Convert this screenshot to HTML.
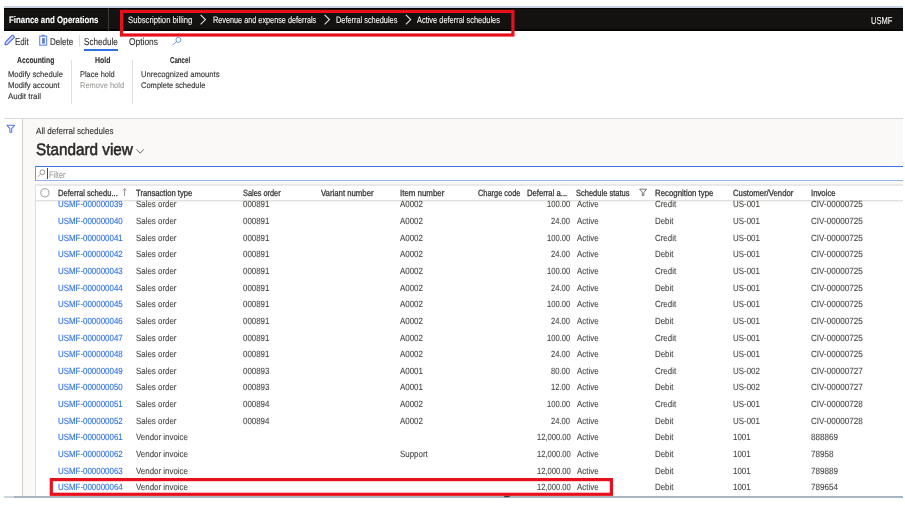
<!DOCTYPE html>
<html><head><meta charset="utf-8"><title>Active deferral schedules</title>
<style>
html,body{margin:0;padding:0;width:905px;height:505px;overflow:hidden;background:#fff;font-family:"Liberation Sans",sans-serif;position:relative}
.a{position:absolute;box-sizing:border-box}
.t{position:absolute;white-space:nowrap;line-height:1;transform-origin:0 0;text-rendering:geometricPrecision;-webkit-text-stroke:0.12px currentColor}
svg.ov{position:absolute;left:0;top:0}
.txt{position:absolute;left:0;top:0;width:905px;height:505px;filter:blur(0.3px)}
</style></head><body>
<!-- top light line -->
<div class=a style="left:4px;top:6px;width:899px;height:2px;background:#c7d1e2"></div>
<!-- nav bar -->
<div class=a style="left:4px;top:8px;width:899px;height:22.6px;background:#131211"></div>
<div class=a style="left:4px;top:8px;width:899px;height:1.2px;background:#000"></div>
<div class=a style="left:4px;top:28.8px;width:899px;height:2px;background:linear-gradient(#050505,#000 60%,rgba(0,0,0,0.25))"></div>
<div class=a style="left:108px;top:8px;width:1px;height:22.6px;background:#3b3a39"></div>
<!-- action pane separators / underline -->
<div class=a style="left:78.6px;top:34.6px;width:1px;height:12px;background:#e1dfdd"></div>
<div class=a style="left:84.2px;top:48.5px;width:33.9px;height:2px;background:#2f6fe0"></div>
<div class=a style="left:70.6px;top:60px;width:1px;height:43.5px;background:#e1dfdd"></div>
<div class=a style="left:131.6px;top:60px;width:1px;height:43.5px;background:#e1dfdd"></div>
<!-- body area -->
<div class=a style="left:4px;top:117.6px;width:899px;height:1.4px;background:#dcdad8"></div>
<div class=a style="left:23px;top:119px;width:880px;height:377px;background:#faf9f8"></div>
<div class=a style="left:22px;top:119px;width:1px;height:377px;background:#d2d0ce"></div>
<!-- filter box -->
<div class=a style="left:35px;top:166px;width:868px;height:15.3px;background:#fff;border-top:1px solid #3a74e2;border-left:1px solid #6d96e8;border-bottom:1.5px solid #95b3ee"></div>
<div class=a style="left:47.4px;top:168.2px;width:1px;height:10.6px;background:#4a4a4a"></div>
<!-- grid -->
<div class=a style="left:35px;top:184.2px;width:868px;height:312px;background:#fff;border-left:1px solid #e1dfdd"></div>
<div class=a style="left:35px;top:184.2px;width:868px;height:1.8px;background:#ebe9e7"></div>
<div class=a style="left:36px;top:200px;width:867px;height:2.8px;background:linear-gradient(#dad8d6,rgba(237,235,233,0.6) 50%,rgba(255,255,255,0))"></div>
<!-- bottom line -->
<div class=a style="left:4px;top:496px;width:899px;height:2px;background:#a9b4c2"></div>
<div class=a style="left:4px;top:496px;width:10px;height:2px;background:#ccd4de"></div>
<svg class=ov width="905" height="505" viewBox="0 0 905 505">
 <!-- breadcrumb chevrons -->
 <g fill="none" stroke="#e1dfdd" stroke-width="1.15">
  <path d="M200.6 14.9 L205.4 19.6 L200.6 24.3"/>
  <path d="M324.6 14.9 L329.4 19.6 L324.6 24.3"/>
  <path d="M405.9 14.9 L410.7 19.6 L405.9 24.3"/>
 </g>
 <!-- pencil -->
 <g transform="translate(9.3 40.3) rotate(-45)">
  <path d="M-6.2 0 L-4 -1.5 H5.3 Q6 -1.5 6 -0.8 V0.8 Q6 1.5 5.3 1.5 H-4 Z" fill="#d5ddf7" stroke="#4169e1" stroke-width="1.05" stroke-linejoin="round"/>
 </g>
 <!-- trash -->
 <rect x="39.7" y="36.2" width="6.9" height="9" fill="none" stroke="#7596ea" stroke-width="1.25"/>
 <path d="M41.9 36 V35.2 H44.6 V36" fill="none" stroke="#4f73e3" stroke-width="0.9"/>
 <rect x="42.1" y="37.9" width="2.8" height="5.8" fill="#5c7fe6"/>
 <!-- search -->
 <circle cx="178.4" cy="39.9" r="2.55" fill="none" stroke="#5b86e8" stroke-width="0.85"/>
 <path d="M176.6 41.8 L172.6 44.8" stroke="#6a8ee8" stroke-width="0.9"/>
 <!-- left filter -->
 <path d="M7 125.3 H14.6 L11.7 128.7 V132.2 H9.9 V128.7 Z" fill="none" stroke="#5677e6" stroke-width="1.05" stroke-linejoin="round"/>
 <!-- view chevron -->
 <path d="M136.6 149.3 L140.2 153.2 L143.8 149.3" fill="none" stroke="#605e5c" stroke-width="0.9"/>
 <!-- filter search -->
 <circle cx="42.4" cy="172.3" r="2.4" fill="none" stroke="#8a8886" stroke-width="0.85"/>
 <path d="M40.7 174.1 L37.6 177" stroke="#b39a88" stroke-width="0.95"/>
 <!-- grid circle -->
 <circle cx="44.9" cy="192.8" r="4.1" fill="none" stroke="#9c9a98" stroke-width="0.95"/>
 <!-- sort arrow -->
 <path d="M124.6 196 V188.8 M122.9 190.6 L124.6 188.6 L126.3 190.6" fill="none" stroke="#8a7f7c" stroke-width="0.85"/>
 <!-- header filter -->
 <path d="M639.6 189.2 H646.6 L643.9 192.2 V195.6 H642.3 V192.2 Z" fill="none" stroke="#6f6d6b" stroke-width="0.95" stroke-linejoin="round"/>
 <!-- cursor -->
 <path d="M504.2 496.6 Q504.8 496.3 506.9 496.5 Q508.8 496.3 509.6 496.6" fill="none" stroke="#3a3a3a" stroke-width="1.3"/>
</svg>
<div class=txt><span class=t style='left:9.30px;top:16px;font-size:9.57px;font-weight:700;color:#ffffff;transform:scaleX(0.821);'>Finance and Operations</span>
<span class=t style='left:128.20px;top:16px;font-size:9.28px;font-weight:400;color:#f3f2f1;transform:scaleX(0.832);'>Subscription billing</span>
<span class=t style='left:212.60px;top:16px;font-size:9.28px;font-weight:400;color:#f3f2f1;transform:scaleX(0.786);'>Revenue and expense deferrals</span>
<span class=t style='left:336.20px;top:16px;font-size:9.28px;font-weight:400;color:#f3f2f1;transform:scaleX(0.794);'>Deferral schedules</span>
<span class=t style='left:417.20px;top:16px;font-size:9.28px;font-weight:400;color:#f3f2f1;transform:scaleX(0.801);'>Active deferral schedules</span>
<span class=t style='left:871.00px;top:17px;font-size:10.14px;font-weight:400;color:#f3f2f1;transform:scaleX(0.745);'>USMF</span>
<span class=t style='left:15.20px;top:38px;font-size:9.86px;font-weight:400;color:#323130;transform:scaleX(0.806);'>Edit</span>
<span class=t style='left:49.80px;top:38px;font-size:9.86px;font-weight:400;color:#323130;transform:scaleX(0.814);'>Delete</span>
<span class=t style='left:84.30px;top:38px;font-size:9.86px;font-weight:400;color:#323130;transform:scaleX(0.820);'>Schedule</span>
<span class=t style='left:129.30px;top:38px;font-size:9.86px;font-weight:400;color:#323130;transform:scaleX(0.853);'>Options</span>
<span class=t style='left:16.70px;top:56px;font-size:8.7px;font-weight:700;color:#323130;transform:scaleX(0.780);'>Accounting</span>
<span class=t style='left:94.50px;top:56px;font-size:8.7px;font-weight:700;color:#323130;transform:scaleX(0.797);'>Hold</span>
<span class=t style='left:170.00px;top:56px;font-size:8.7px;font-weight:700;color:#323130;transform:scaleX(0.705);'>Cancel</span>
<span class=t style='left:8.00px;top:71px;font-size:8.26px;font-weight:400;color:#323130;transform:scaleX(0.921);'>Modify schedule</span>
<span class=t style='left:8.00px;top:82px;font-size:8.26px;font-weight:400;color:#323130;transform:scaleX(0.931);'>Modify account</span>
<span class=t style='left:7.70px;top:93px;font-size:8.26px;font-weight:400;color:#323130;transform:scaleX(0.961);'>Audit trail</span>
<span class=t style='left:80.00px;top:71px;font-size:8.26px;font-weight:400;color:#323130;transform:scaleX(0.900);'>Place hold</span>
<span class=t style='left:79.80px;top:82px;font-size:8.26px;font-weight:400;color:#a19f9d;transform:scaleX(0.906);'>Remove hold</span>
<span class=t style='left:140.80px;top:71px;font-size:8.26px;font-weight:400;color:#323130;transform:scaleX(0.925);'>Unrecognized amounts</span>
<span class=t style='left:140.80px;top:82px;font-size:8.26px;font-weight:400;color:#323130;transform:scaleX(0.912);'>Complete schedule</span>
<span class=t style='left:35.90px;top:127px;font-size:9.13px;font-weight:400;color:#323130;transform:scaleX(0.888);'>All deferral schedules</span>
<span class=t style='left:36.40px;top:142px;font-size:16.52px;font-weight:400;color:#292827;transform:scaleX(0.926);-webkit-text-stroke:0.55px #292827'>Standard view</span>
<span class=t style='left:49.30px;top:171px;font-size:9.57px;font-weight:400;color:#979593;transform:scaleX(0.776);-webkit-text-stroke:0'>Filter</span>
<span class=t style='left:57.50px;top:189px;font-size:8.99px;font-weight:400;color:#363534;transform:scaleX(0.843);-webkit-text-stroke:0.28px #363534'>Deferral schedu...</span>
<span class=t style='left:136.00px;top:189px;font-size:8.99px;font-weight:400;color:#363534;transform:scaleX(0.851);-webkit-text-stroke:0.28px #363534'>Transaction type</span>
<span class=t style='left:243.20px;top:189px;font-size:8.99px;font-weight:400;color:#363534;transform:scaleX(0.820);-webkit-text-stroke:0.28px #363534'>Sales order</span>
<span class=t style='left:321.40px;top:189px;font-size:8.99px;font-weight:400;color:#363534;transform:scaleX(0.865);-webkit-text-stroke:0.28px #363534'>Variant number</span>
<span class=t style='left:399.50px;top:189px;font-size:8.99px;font-weight:400;color:#363534;transform:scaleX(0.880);-webkit-text-stroke:0.28px #363534'>Item number</span>
<span class=t style='left:478.20px;top:189px;font-size:8.99px;font-weight:400;color:#363534;transform:scaleX(0.824);-webkit-text-stroke:0.28px #363534'>Charge code</span>
<span class=t style='left:527.30px;top:189px;font-size:8.99px;font-weight:400;color:#363534;transform:scaleX(0.856);-webkit-text-stroke:0.28px #363534'>Deferral a...</span>
<span class=t style='left:576.20px;top:189px;font-size:8.99px;font-weight:400;color:#363534;transform:scaleX(0.836);-webkit-text-stroke:0.28px #363534'>Schedule status</span>
<span class=t style='left:655.00px;top:189px;font-size:8.99px;font-weight:400;color:#363534;transform:scaleX(0.872);-webkit-text-stroke:0.28px #363534'>Recognition type</span>
<span class=t style='left:733.40px;top:189px;font-size:8.99px;font-weight:400;color:#363534;transform:scaleX(0.863);-webkit-text-stroke:0.28px #363534'>Customer/Vendor</span>
<span class=t style='left:811.20px;top:189px;font-size:8.99px;font-weight:400;color:#363534;transform:scaleX(0.864);-webkit-text-stroke:0.28px #363534'>Invoice</span>
<span class=t style='left:57.80px;top:200px;font-size:9.06px;font-weight:400;color:#2c6fe4;transform:scaleX(0.875);'>USMF-000000039</span>
<span class=t style='left:136.10px;top:200px;font-size:9.06px;font-weight:400;color:#4a4947;transform:scaleX(0.875);'>Sales order</span>
<span class=t style='left:243.20px;top:200px;font-size:9.06px;font-weight:400;color:#4a4947;transform:scaleX(0.875);'>000891</span>
<span class=t style='left:399.90px;top:200px;font-size:9.06px;font-weight:400;color:#4a4947;transform:scaleX(0.875);'>A0002</span>
<span class=t style='left:547.22px;top:200px;font-size:9.06px;font-weight:400;color:#4a4947;transform:scaleX(0.840);'>100.00</span>
<span class=t style='left:577.00px;top:200px;font-size:9.06px;font-weight:400;color:#4a4947;transform:scaleX(0.875);'>Active</span>
<span class=t style='left:655.00px;top:200px;font-size:9.06px;font-weight:400;color:#4a4947;transform:scaleX(0.875);'>Credit</span>
<span class=t style='left:733.40px;top:200px;font-size:9.06px;font-weight:400;color:#4a4947;transform:scaleX(0.875);'>US-001</span>
<span class=t style='left:811.20px;top:200px;font-size:9.06px;font-weight:400;color:#4a4947;transform:scaleX(0.895);'>CIV-00000725</span>
<span class=t style='left:57.80px;top:217px;font-size:9.06px;font-weight:400;color:#2c6fe4;transform:scaleX(0.875);'>USMF-000000040</span>
<span class=t style='left:136.10px;top:217px;font-size:9.06px;font-weight:400;color:#4a4947;transform:scaleX(0.875);'>Sales order</span>
<span class=t style='left:243.20px;top:217px;font-size:9.06px;font-weight:400;color:#4a4947;transform:scaleX(0.875);'>000891</span>
<span class=t style='left:399.90px;top:217px;font-size:9.06px;font-weight:400;color:#4a4947;transform:scaleX(0.875);'>A0002</span>
<span class=t style='left:551.45px;top:217px;font-size:9.06px;font-weight:400;color:#4a4947;transform:scaleX(0.840);'>24.00</span>
<span class=t style='left:577.00px;top:217px;font-size:9.06px;font-weight:400;color:#4a4947;transform:scaleX(0.875);'>Active</span>
<span class=t style='left:655.00px;top:217px;font-size:9.06px;font-weight:400;color:#4a4947;transform:scaleX(0.875);'>Debit</span>
<span class=t style='left:733.40px;top:217px;font-size:9.06px;font-weight:400;color:#4a4947;transform:scaleX(0.875);'>US-001</span>
<span class=t style='left:811.20px;top:217px;font-size:9.06px;font-weight:400;color:#4a4947;transform:scaleX(0.895);'>CIV-00000725</span>
<span class=t style='left:57.80px;top:234px;font-size:9.06px;font-weight:400;color:#2c6fe4;transform:scaleX(0.875);'>USMF-000000041</span>
<span class=t style='left:136.10px;top:234px;font-size:9.06px;font-weight:400;color:#4a4947;transform:scaleX(0.875);'>Sales order</span>
<span class=t style='left:243.20px;top:234px;font-size:9.06px;font-weight:400;color:#4a4947;transform:scaleX(0.875);'>000891</span>
<span class=t style='left:399.90px;top:234px;font-size:9.06px;font-weight:400;color:#4a4947;transform:scaleX(0.875);'>A0002</span>
<span class=t style='left:547.22px;top:234px;font-size:9.06px;font-weight:400;color:#4a4947;transform:scaleX(0.840);'>100.00</span>
<span class=t style='left:577.00px;top:234px;font-size:9.06px;font-weight:400;color:#4a4947;transform:scaleX(0.875);'>Active</span>
<span class=t style='left:655.00px;top:234px;font-size:9.06px;font-weight:400;color:#4a4947;transform:scaleX(0.875);'>Credit</span>
<span class=t style='left:733.40px;top:234px;font-size:9.06px;font-weight:400;color:#4a4947;transform:scaleX(0.875);'>US-001</span>
<span class=t style='left:811.20px;top:234px;font-size:9.06px;font-weight:400;color:#4a4947;transform:scaleX(0.895);'>CIV-00000725</span>
<span class=t style='left:57.80px;top:250px;font-size:9.06px;font-weight:400;color:#2c6fe4;transform:scaleX(0.875);'>USMF-000000042</span>
<span class=t style='left:136.10px;top:250px;font-size:9.06px;font-weight:400;color:#4a4947;transform:scaleX(0.875);'>Sales order</span>
<span class=t style='left:243.20px;top:250px;font-size:9.06px;font-weight:400;color:#4a4947;transform:scaleX(0.875);'>000891</span>
<span class=t style='left:399.90px;top:250px;font-size:9.06px;font-weight:400;color:#4a4947;transform:scaleX(0.875);'>A0002</span>
<span class=t style='left:551.45px;top:250px;font-size:9.06px;font-weight:400;color:#4a4947;transform:scaleX(0.840);'>24.00</span>
<span class=t style='left:577.00px;top:250px;font-size:9.06px;font-weight:400;color:#4a4947;transform:scaleX(0.875);'>Active</span>
<span class=t style='left:655.00px;top:250px;font-size:9.06px;font-weight:400;color:#4a4947;transform:scaleX(0.875);'>Debit</span>
<span class=t style='left:733.40px;top:250px;font-size:9.06px;font-weight:400;color:#4a4947;transform:scaleX(0.875);'>US-001</span>
<span class=t style='left:811.20px;top:250px;font-size:9.06px;font-weight:400;color:#4a4947;transform:scaleX(0.895);'>CIV-00000725</span>
<span class=t style='left:57.80px;top:267px;font-size:9.06px;font-weight:400;color:#2c6fe4;transform:scaleX(0.875);'>USMF-000000043</span>
<span class=t style='left:136.10px;top:267px;font-size:9.06px;font-weight:400;color:#4a4947;transform:scaleX(0.875);'>Sales order</span>
<span class=t style='left:243.20px;top:267px;font-size:9.06px;font-weight:400;color:#4a4947;transform:scaleX(0.875);'>000891</span>
<span class=t style='left:399.90px;top:267px;font-size:9.06px;font-weight:400;color:#4a4947;transform:scaleX(0.875);'>A0002</span>
<span class=t style='left:547.22px;top:267px;font-size:9.06px;font-weight:400;color:#4a4947;transform:scaleX(0.840);'>100.00</span>
<span class=t style='left:577.00px;top:267px;font-size:9.06px;font-weight:400;color:#4a4947;transform:scaleX(0.875);'>Active</span>
<span class=t style='left:655.00px;top:267px;font-size:9.06px;font-weight:400;color:#4a4947;transform:scaleX(0.875);'>Credit</span>
<span class=t style='left:733.40px;top:267px;font-size:9.06px;font-weight:400;color:#4a4947;transform:scaleX(0.875);'>US-001</span>
<span class=t style='left:811.20px;top:267px;font-size:9.06px;font-weight:400;color:#4a4947;transform:scaleX(0.895);'>CIV-00000725</span>
<span class=t style='left:57.80px;top:284px;font-size:9.06px;font-weight:400;color:#2c6fe4;transform:scaleX(0.875);'>USMF-000000044</span>
<span class=t style='left:136.10px;top:284px;font-size:9.06px;font-weight:400;color:#4a4947;transform:scaleX(0.875);'>Sales order</span>
<span class=t style='left:243.20px;top:284px;font-size:9.06px;font-weight:400;color:#4a4947;transform:scaleX(0.875);'>000891</span>
<span class=t style='left:399.90px;top:284px;font-size:9.06px;font-weight:400;color:#4a4947;transform:scaleX(0.875);'>A0002</span>
<span class=t style='left:551.45px;top:284px;font-size:9.06px;font-weight:400;color:#4a4947;transform:scaleX(0.840);'>24.00</span>
<span class=t style='left:577.00px;top:284px;font-size:9.06px;font-weight:400;color:#4a4947;transform:scaleX(0.875);'>Active</span>
<span class=t style='left:655.00px;top:284px;font-size:9.06px;font-weight:400;color:#4a4947;transform:scaleX(0.875);'>Debit</span>
<span class=t style='left:733.40px;top:284px;font-size:9.06px;font-weight:400;color:#4a4947;transform:scaleX(0.875);'>US-001</span>
<span class=t style='left:811.20px;top:284px;font-size:9.06px;font-weight:400;color:#4a4947;transform:scaleX(0.895);'>CIV-00000725</span>
<span class=t style='left:57.80px;top:300px;font-size:9.06px;font-weight:400;color:#2c6fe4;transform:scaleX(0.875);'>USMF-000000045</span>
<span class=t style='left:136.10px;top:300px;font-size:9.06px;font-weight:400;color:#4a4947;transform:scaleX(0.875);'>Sales order</span>
<span class=t style='left:243.20px;top:300px;font-size:9.06px;font-weight:400;color:#4a4947;transform:scaleX(0.875);'>000891</span>
<span class=t style='left:399.90px;top:300px;font-size:9.06px;font-weight:400;color:#4a4947;transform:scaleX(0.875);'>A0002</span>
<span class=t style='left:547.22px;top:300px;font-size:9.06px;font-weight:400;color:#4a4947;transform:scaleX(0.840);'>100.00</span>
<span class=t style='left:577.00px;top:300px;font-size:9.06px;font-weight:400;color:#4a4947;transform:scaleX(0.875);'>Active</span>
<span class=t style='left:655.00px;top:300px;font-size:9.06px;font-weight:400;color:#4a4947;transform:scaleX(0.875);'>Credit</span>
<span class=t style='left:733.40px;top:300px;font-size:9.06px;font-weight:400;color:#4a4947;transform:scaleX(0.875);'>US-001</span>
<span class=t style='left:811.20px;top:300px;font-size:9.06px;font-weight:400;color:#4a4947;transform:scaleX(0.895);'>CIV-00000725</span>
<span class=t style='left:57.80px;top:317px;font-size:9.06px;font-weight:400;color:#2c6fe4;transform:scaleX(0.875);'>USMF-000000046</span>
<span class=t style='left:136.10px;top:317px;font-size:9.06px;font-weight:400;color:#4a4947;transform:scaleX(0.875);'>Sales order</span>
<span class=t style='left:243.20px;top:317px;font-size:9.06px;font-weight:400;color:#4a4947;transform:scaleX(0.875);'>000891</span>
<span class=t style='left:399.90px;top:317px;font-size:9.06px;font-weight:400;color:#4a4947;transform:scaleX(0.875);'>A0002</span>
<span class=t style='left:551.45px;top:317px;font-size:9.06px;font-weight:400;color:#4a4947;transform:scaleX(0.840);'>24.00</span>
<span class=t style='left:577.00px;top:317px;font-size:9.06px;font-weight:400;color:#4a4947;transform:scaleX(0.875);'>Active</span>
<span class=t style='left:655.00px;top:317px;font-size:9.06px;font-weight:400;color:#4a4947;transform:scaleX(0.875);'>Debit</span>
<span class=t style='left:733.40px;top:317px;font-size:9.06px;font-weight:400;color:#4a4947;transform:scaleX(0.875);'>US-001</span>
<span class=t style='left:811.20px;top:317px;font-size:9.06px;font-weight:400;color:#4a4947;transform:scaleX(0.895);'>CIV-00000725</span>
<span class=t style='left:57.80px;top:334px;font-size:9.06px;font-weight:400;color:#2c6fe4;transform:scaleX(0.875);'>USMF-000000047</span>
<span class=t style='left:136.10px;top:334px;font-size:9.06px;font-weight:400;color:#4a4947;transform:scaleX(0.875);'>Sales order</span>
<span class=t style='left:243.20px;top:334px;font-size:9.06px;font-weight:400;color:#4a4947;transform:scaleX(0.875);'>000891</span>
<span class=t style='left:399.90px;top:334px;font-size:9.06px;font-weight:400;color:#4a4947;transform:scaleX(0.875);'>A0002</span>
<span class=t style='left:547.22px;top:334px;font-size:9.06px;font-weight:400;color:#4a4947;transform:scaleX(0.840);'>100.00</span>
<span class=t style='left:577.00px;top:334px;font-size:9.06px;font-weight:400;color:#4a4947;transform:scaleX(0.875);'>Active</span>
<span class=t style='left:655.00px;top:334px;font-size:9.06px;font-weight:400;color:#4a4947;transform:scaleX(0.875);'>Credit</span>
<span class=t style='left:733.40px;top:334px;font-size:9.06px;font-weight:400;color:#4a4947;transform:scaleX(0.875);'>US-001</span>
<span class=t style='left:811.20px;top:334px;font-size:9.06px;font-weight:400;color:#4a4947;transform:scaleX(0.895);'>CIV-00000725</span>
<span class=t style='left:57.80px;top:350px;font-size:9.06px;font-weight:400;color:#2c6fe4;transform:scaleX(0.875);'>USMF-000000048</span>
<span class=t style='left:136.10px;top:350px;font-size:9.06px;font-weight:400;color:#4a4947;transform:scaleX(0.875);'>Sales order</span>
<span class=t style='left:243.20px;top:350px;font-size:9.06px;font-weight:400;color:#4a4947;transform:scaleX(0.875);'>000891</span>
<span class=t style='left:399.90px;top:350px;font-size:9.06px;font-weight:400;color:#4a4947;transform:scaleX(0.875);'>A0002</span>
<span class=t style='left:551.45px;top:350px;font-size:9.06px;font-weight:400;color:#4a4947;transform:scaleX(0.840);'>24.00</span>
<span class=t style='left:577.00px;top:350px;font-size:9.06px;font-weight:400;color:#4a4947;transform:scaleX(0.875);'>Active</span>
<span class=t style='left:655.00px;top:350px;font-size:9.06px;font-weight:400;color:#4a4947;transform:scaleX(0.875);'>Debit</span>
<span class=t style='left:733.40px;top:350px;font-size:9.06px;font-weight:400;color:#4a4947;transform:scaleX(0.875);'>US-001</span>
<span class=t style='left:811.20px;top:350px;font-size:9.06px;font-weight:400;color:#4a4947;transform:scaleX(0.895);'>CIV-00000725</span>
<span class=t style='left:57.80px;top:367px;font-size:9.06px;font-weight:400;color:#2c6fe4;transform:scaleX(0.875);'>USMF-000000049</span>
<span class=t style='left:136.10px;top:367px;font-size:9.06px;font-weight:400;color:#4a4947;transform:scaleX(0.875);'>Sales order</span>
<span class=t style='left:243.20px;top:367px;font-size:9.06px;font-weight:400;color:#4a4947;transform:scaleX(0.875);'>000893</span>
<span class=t style='left:399.90px;top:367px;font-size:9.06px;font-weight:400;color:#4a4947;transform:scaleX(0.875);'>A0001</span>
<span class=t style='left:551.45px;top:367px;font-size:9.06px;font-weight:400;color:#4a4947;transform:scaleX(0.840);'>80.00</span>
<span class=t style='left:577.00px;top:367px;font-size:9.06px;font-weight:400;color:#4a4947;transform:scaleX(0.875);'>Active</span>
<span class=t style='left:655.00px;top:367px;font-size:9.06px;font-weight:400;color:#4a4947;transform:scaleX(0.875);'>Credit</span>
<span class=t style='left:733.40px;top:367px;font-size:9.06px;font-weight:400;color:#4a4947;transform:scaleX(0.875);'>US-002</span>
<span class=t style='left:811.20px;top:367px;font-size:9.06px;font-weight:400;color:#4a4947;transform:scaleX(0.895);'>CIV-00000727</span>
<span class=t style='left:57.80px;top:383px;font-size:9.06px;font-weight:400;color:#2c6fe4;transform:scaleX(0.875);'>USMF-000000050</span>
<span class=t style='left:136.10px;top:383px;font-size:9.06px;font-weight:400;color:#4a4947;transform:scaleX(0.875);'>Sales order</span>
<span class=t style='left:243.20px;top:383px;font-size:9.06px;font-weight:400;color:#4a4947;transform:scaleX(0.875);'>000893</span>
<span class=t style='left:399.90px;top:383px;font-size:9.06px;font-weight:400;color:#4a4947;transform:scaleX(0.875);'>A0001</span>
<span class=t style='left:551.45px;top:383px;font-size:9.06px;font-weight:400;color:#4a4947;transform:scaleX(0.840);'>12.00</span>
<span class=t style='left:577.00px;top:383px;font-size:9.06px;font-weight:400;color:#4a4947;transform:scaleX(0.875);'>Active</span>
<span class=t style='left:655.00px;top:383px;font-size:9.06px;font-weight:400;color:#4a4947;transform:scaleX(0.875);'>Debit</span>
<span class=t style='left:733.40px;top:383px;font-size:9.06px;font-weight:400;color:#4a4947;transform:scaleX(0.875);'>US-002</span>
<span class=t style='left:811.20px;top:383px;font-size:9.06px;font-weight:400;color:#4a4947;transform:scaleX(0.895);'>CIV-00000727</span>
<span class=t style='left:57.80px;top:400px;font-size:9.06px;font-weight:400;color:#2c6fe4;transform:scaleX(0.875);'>USMF-000000051</span>
<span class=t style='left:136.10px;top:400px;font-size:9.06px;font-weight:400;color:#4a4947;transform:scaleX(0.875);'>Sales order</span>
<span class=t style='left:243.20px;top:400px;font-size:9.06px;font-weight:400;color:#4a4947;transform:scaleX(0.875);'>000894</span>
<span class=t style='left:399.90px;top:400px;font-size:9.06px;font-weight:400;color:#4a4947;transform:scaleX(0.875);'>A0002</span>
<span class=t style='left:547.22px;top:400px;font-size:9.06px;font-weight:400;color:#4a4947;transform:scaleX(0.840);'>100.00</span>
<span class=t style='left:577.00px;top:400px;font-size:9.06px;font-weight:400;color:#4a4947;transform:scaleX(0.875);'>Active</span>
<span class=t style='left:655.00px;top:400px;font-size:9.06px;font-weight:400;color:#4a4947;transform:scaleX(0.875);'>Credit</span>
<span class=t style='left:733.40px;top:400px;font-size:9.06px;font-weight:400;color:#4a4947;transform:scaleX(0.875);'>US-001</span>
<span class=t style='left:811.20px;top:400px;font-size:9.06px;font-weight:400;color:#4a4947;transform:scaleX(0.895);'>CIV-00000728</span>
<span class=t style='left:57.80px;top:417px;font-size:9.06px;font-weight:400;color:#2c6fe4;transform:scaleX(0.875);'>USMF-000000052</span>
<span class=t style='left:136.10px;top:417px;font-size:9.06px;font-weight:400;color:#4a4947;transform:scaleX(0.875);'>Sales order</span>
<span class=t style='left:243.20px;top:417px;font-size:9.06px;font-weight:400;color:#4a4947;transform:scaleX(0.875);'>000894</span>
<span class=t style='left:399.90px;top:417px;font-size:9.06px;font-weight:400;color:#4a4947;transform:scaleX(0.875);'>A0002</span>
<span class=t style='left:551.45px;top:417px;font-size:9.06px;font-weight:400;color:#4a4947;transform:scaleX(0.840);'>24.00</span>
<span class=t style='left:577.00px;top:417px;font-size:9.06px;font-weight:400;color:#4a4947;transform:scaleX(0.875);'>Active</span>
<span class=t style='left:655.00px;top:417px;font-size:9.06px;font-weight:400;color:#4a4947;transform:scaleX(0.875);'>Debit</span>
<span class=t style='left:733.40px;top:417px;font-size:9.06px;font-weight:400;color:#4a4947;transform:scaleX(0.875);'>US-001</span>
<span class=t style='left:811.20px;top:417px;font-size:9.06px;font-weight:400;color:#4a4947;transform:scaleX(0.895);'>CIV-00000728</span>
<span class=t style='left:57.80px;top:433px;font-size:9.06px;font-weight:400;color:#2c6fe4;transform:scaleX(0.875);'>USMF-000000061</span>
<span class=t style='left:136.10px;top:433px;font-size:9.06px;font-weight:400;color:#4a4947;transform:scaleX(0.875);'>Vendor invoice</span>
<span class=t style='left:536.64px;top:433px;font-size:9.06px;font-weight:400;color:#4a4947;transform:scaleX(0.840);'>12,000.00</span>
<span class=t style='left:577.00px;top:433px;font-size:9.06px;font-weight:400;color:#4a4947;transform:scaleX(0.875);'>Active</span>
<span class=t style='left:655.00px;top:433px;font-size:9.06px;font-weight:400;color:#4a4947;transform:scaleX(0.875);'>Debit</span>
<span class=t style='left:733.40px;top:433px;font-size:9.06px;font-weight:400;color:#4a4947;transform:scaleX(0.875);'>1001</span>
<span class=t style='left:811.20px;top:433px;font-size:9.06px;font-weight:400;color:#4a4947;transform:scaleX(0.895);'>888869</span>
<span class=t style='left:57.80px;top:450px;font-size:9.06px;font-weight:400;color:#2c6fe4;transform:scaleX(0.875);'>USMF-000000062</span>
<span class=t style='left:136.10px;top:450px;font-size:9.06px;font-weight:400;color:#4a4947;transform:scaleX(0.875);'>Vendor invoice</span>
<span class=t style='left:399.90px;top:450px;font-size:9.06px;font-weight:400;color:#4a4947;transform:scaleX(0.875);'>Support</span>
<span class=t style='left:536.64px;top:450px;font-size:9.06px;font-weight:400;color:#4a4947;transform:scaleX(0.840);'>12,000.00</span>
<span class=t style='left:577.00px;top:450px;font-size:9.06px;font-weight:400;color:#4a4947;transform:scaleX(0.875);'>Active</span>
<span class=t style='left:655.00px;top:450px;font-size:9.06px;font-weight:400;color:#4a4947;transform:scaleX(0.875);'>Debit</span>
<span class=t style='left:733.40px;top:450px;font-size:9.06px;font-weight:400;color:#4a4947;transform:scaleX(0.875);'>1001</span>
<span class=t style='left:811.20px;top:450px;font-size:9.06px;font-weight:400;color:#4a4947;transform:scaleX(0.895);'>78958</span>
<span class=t style='left:57.80px;top:467px;font-size:9.06px;font-weight:400;color:#2c6fe4;transform:scaleX(0.875);'>USMF-000000063</span>
<span class=t style='left:136.10px;top:467px;font-size:9.06px;font-weight:400;color:#4a4947;transform:scaleX(0.875);'>Vendor invoice</span>
<span class=t style='left:536.64px;top:467px;font-size:9.06px;font-weight:400;color:#4a4947;transform:scaleX(0.840);'>12,000.00</span>
<span class=t style='left:577.00px;top:467px;font-size:9.06px;font-weight:400;color:#4a4947;transform:scaleX(0.875);'>Active</span>
<span class=t style='left:655.00px;top:467px;font-size:9.06px;font-weight:400;color:#4a4947;transform:scaleX(0.875);'>Debit</span>
<span class=t style='left:733.40px;top:467px;font-size:9.06px;font-weight:400;color:#4a4947;transform:scaleX(0.875);'>1001</span>
<span class=t style='left:811.20px;top:467px;font-size:9.06px;font-weight:400;color:#4a4947;transform:scaleX(0.895);'>789889</span>
<span class=t style='left:57.80px;top:483px;font-size:9.06px;font-weight:400;color:#2c6fe4;transform:scaleX(0.875);'>USMF-000000064</span>
<span class=t style='left:136.10px;top:483px;font-size:9.06px;font-weight:400;color:#4a4947;transform:scaleX(0.875);'>Vendor invoice</span>
<span class=t style='left:536.64px;top:483px;font-size:9.06px;font-weight:400;color:#4a4947;transform:scaleX(0.840);'>12,000.00</span>
<span class=t style='left:577.00px;top:483px;font-size:9.06px;font-weight:400;color:#4a4947;transform:scaleX(0.875);'>Active</span>
<span class=t style='left:655.00px;top:483px;font-size:9.06px;font-weight:400;color:#4a4947;transform:scaleX(0.875);'>Debit</span>
<span class=t style='left:733.40px;top:483px;font-size:9.06px;font-weight:400;color:#4a4947;transform:scaleX(0.875);'>1001</span>
<span class=t style='left:811.20px;top:483px;font-size:9.06px;font-weight:400;color:#4a4947;transform:scaleX(0.895);'>789654</span></div>
<!-- red highlight boxes -->
<svg class=ov width="905" height="505" viewBox="0 0 905 505"><g fill="none" stroke="#e8101c" stroke-width="3.2">
<rect x="121.6" y="11.5" width="391.3" height="23.5"/>
<rect x="51.3" y="479.6" width="560.1" height="14.7"/>
</g></svg>
</body></html>
